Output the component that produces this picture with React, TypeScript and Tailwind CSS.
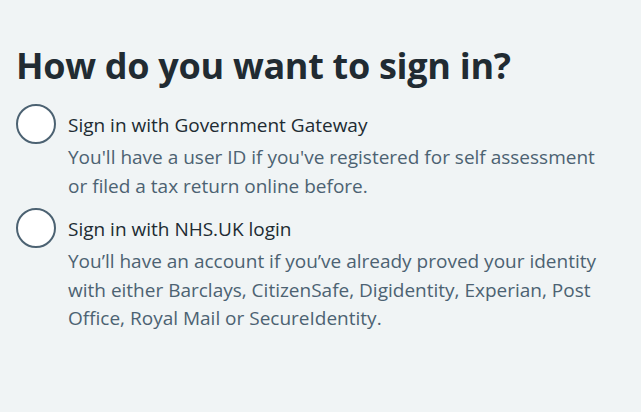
const options = [
  {
    label: 'Sign in with Government Gateway',
    hint: "You'll have a user ID if you've registered for self assessment or filed a tax return online before.",
  },
  {
    label: 'Sign in with NHS.UK login',
    hint: 'You’ll have an account if you’ve already proved your identity with either Barclays, CitizenSafe, Digidentity, Experian, Post Office, Royal Mail or SecureIdentity.',
  },
]

export default function App() {
  return (
    <div className="min-h-[412px] w-full bg-[#f0f4f5] px-4 pt-[42px] font-['Open_Sans','Noto_Sans',sans-serif] text-[#212b32]">
      <fieldset>
        <legend className="text-[36px] font-bold leading-[48px] tracking-[-0.3px]">How do you want to sign in?</legend>
        <div className="mt-[14px] flex flex-col gap-[8px]">
          {options.map(o => (
            <label key={o.label} className="flex items-start gap-3">
              <span className="h-10 w-10 shrink-0 rounded-full border-2 border-[#4c6272] bg-white" />
              <span className="flex flex-col pt-[7px]">
                <span className="text-[19px] leading-[28px]">{o.label}</span>
                <span className="mt-[4px] max-w-[540px] text-[19px] leading-[28.5px] text-[#4c6272]">{o.hint}</span>
              </span>
            </label>
          ))}
        </div>
      </fieldset>
    </div>
  )
}
